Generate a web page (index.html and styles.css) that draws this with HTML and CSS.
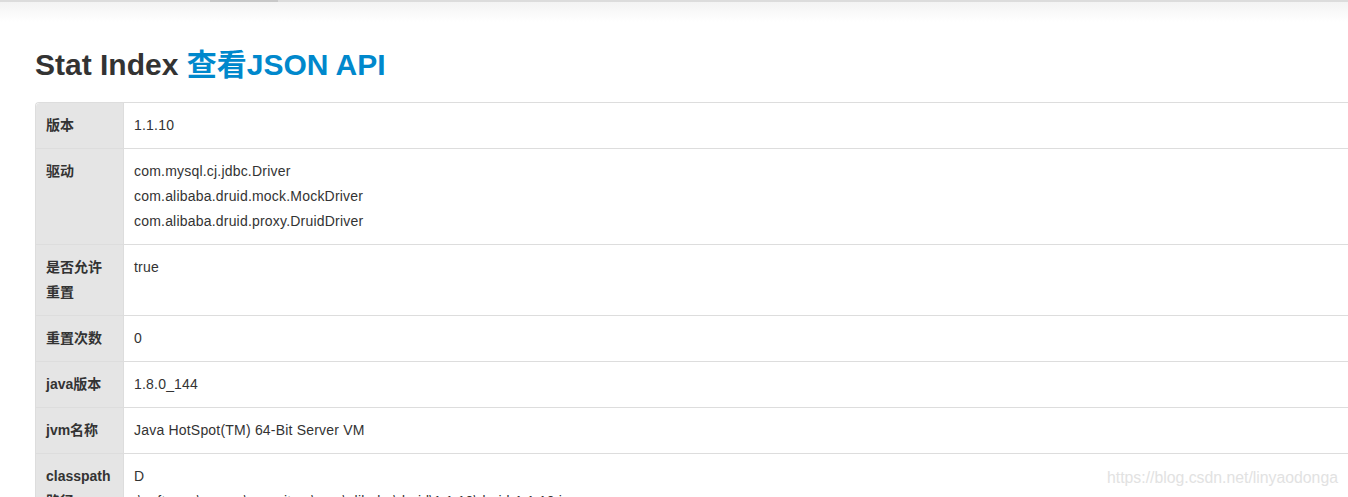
FILE: index.html
```html
<!DOCTYPE html>
<html>
<head>
<meta charset="utf-8">
<link rel="stylesheet" href="styles.css">
</head>
<body>
<div class="topbar"><div class="tab"></div></div>
<div class="container">
  <h1 class="title">Stat Index <a href="#">查看JSON API</a></h1>
  <table class="stats">
    <tr><th>版本</th><td>1.1.10</td></tr>
    <tr><th>驱动</th><td>com.mysql.cj.jdbc.Driver<br>com.alibaba.druid.mock.MockDriver<br>com.alibaba.druid.proxy.DruidDriver</td></tr>
    <tr><th>是否允许重置</th><td>true</td></tr>
    <tr><th>重置次数</th><td>0</td></tr>
    <tr><th>java版本</th><td>1.8.0_144</td></tr>
    <tr><th>jvm名称</th><td>Java HotSpot(TM) 64-Bit Server VM</td></tr>
    <tr><th>classpath路径</th><td>D<br>:\software\maven\repository\com\alibaba\druid\1.1.10\druid-1.1.10.jar</td></tr>
  </table>
</div>
<div class="watermark">https://blog.csdn.net/linyaodonga</div>
</body>
</html>
```
FILE: styles.css
```css
html, body {
  margin: 0;
  padding: 0;
  overflow: hidden;
  background: #fff;
}
body {
  font-family: "Liberation Sans", Arial, "Noto Sans CJK SC", sans-serif;
  font-size: 14px;
  color: #333;
  width: 1348px;
  height: 497px;
  position: relative;
}
.topbar {
  height: 20px;
  border-top: 2px solid #dcdcdc;
  background: linear-gradient(#f3f3f3, #fff);
  position: relative;
}
.tab {
  position: absolute;
  left: 210px;
  top: -2px;
  width: 68px;
  height: 2px;
  background: #c8c8c8;
}
.container {
  padding-left: 35px;
}
.title {
  margin: 26px 0 20px;
  font-size: 30px;
  line-height: 34px;
  font-weight: bold;
  color: #333;
}
.title a {
  color: #0088cc;
  text-decoration: none;
}
.stats {
  border-collapse: separate;
  border-spacing: 0;
  width: 1400px;
  border-left: 1px solid #ddd;
  border-top: 1px solid #ddd;
  border-top-left-radius: 4px;
}
.stats th, .stats td {
  text-align: left;
  vertical-align: top;
  padding: 10px;
  line-height: 25px;
  border-bottom: 1px solid #ddd;
}
.stats td {
  letter-spacing: 0.2px;
}
.stats th {
  width: 67px;
  background: #e5e5e5;
  font-weight: bold;
  border-right: 1px solid #ddd;
}
.stats tr:first-child th {
  border-top-left-radius: 4px;
}
.watermark {
  position: absolute;
  left: 1107px;
  top: 469px;
  font-size: 15.8px;
  color: #e2e2e2;
}
```
